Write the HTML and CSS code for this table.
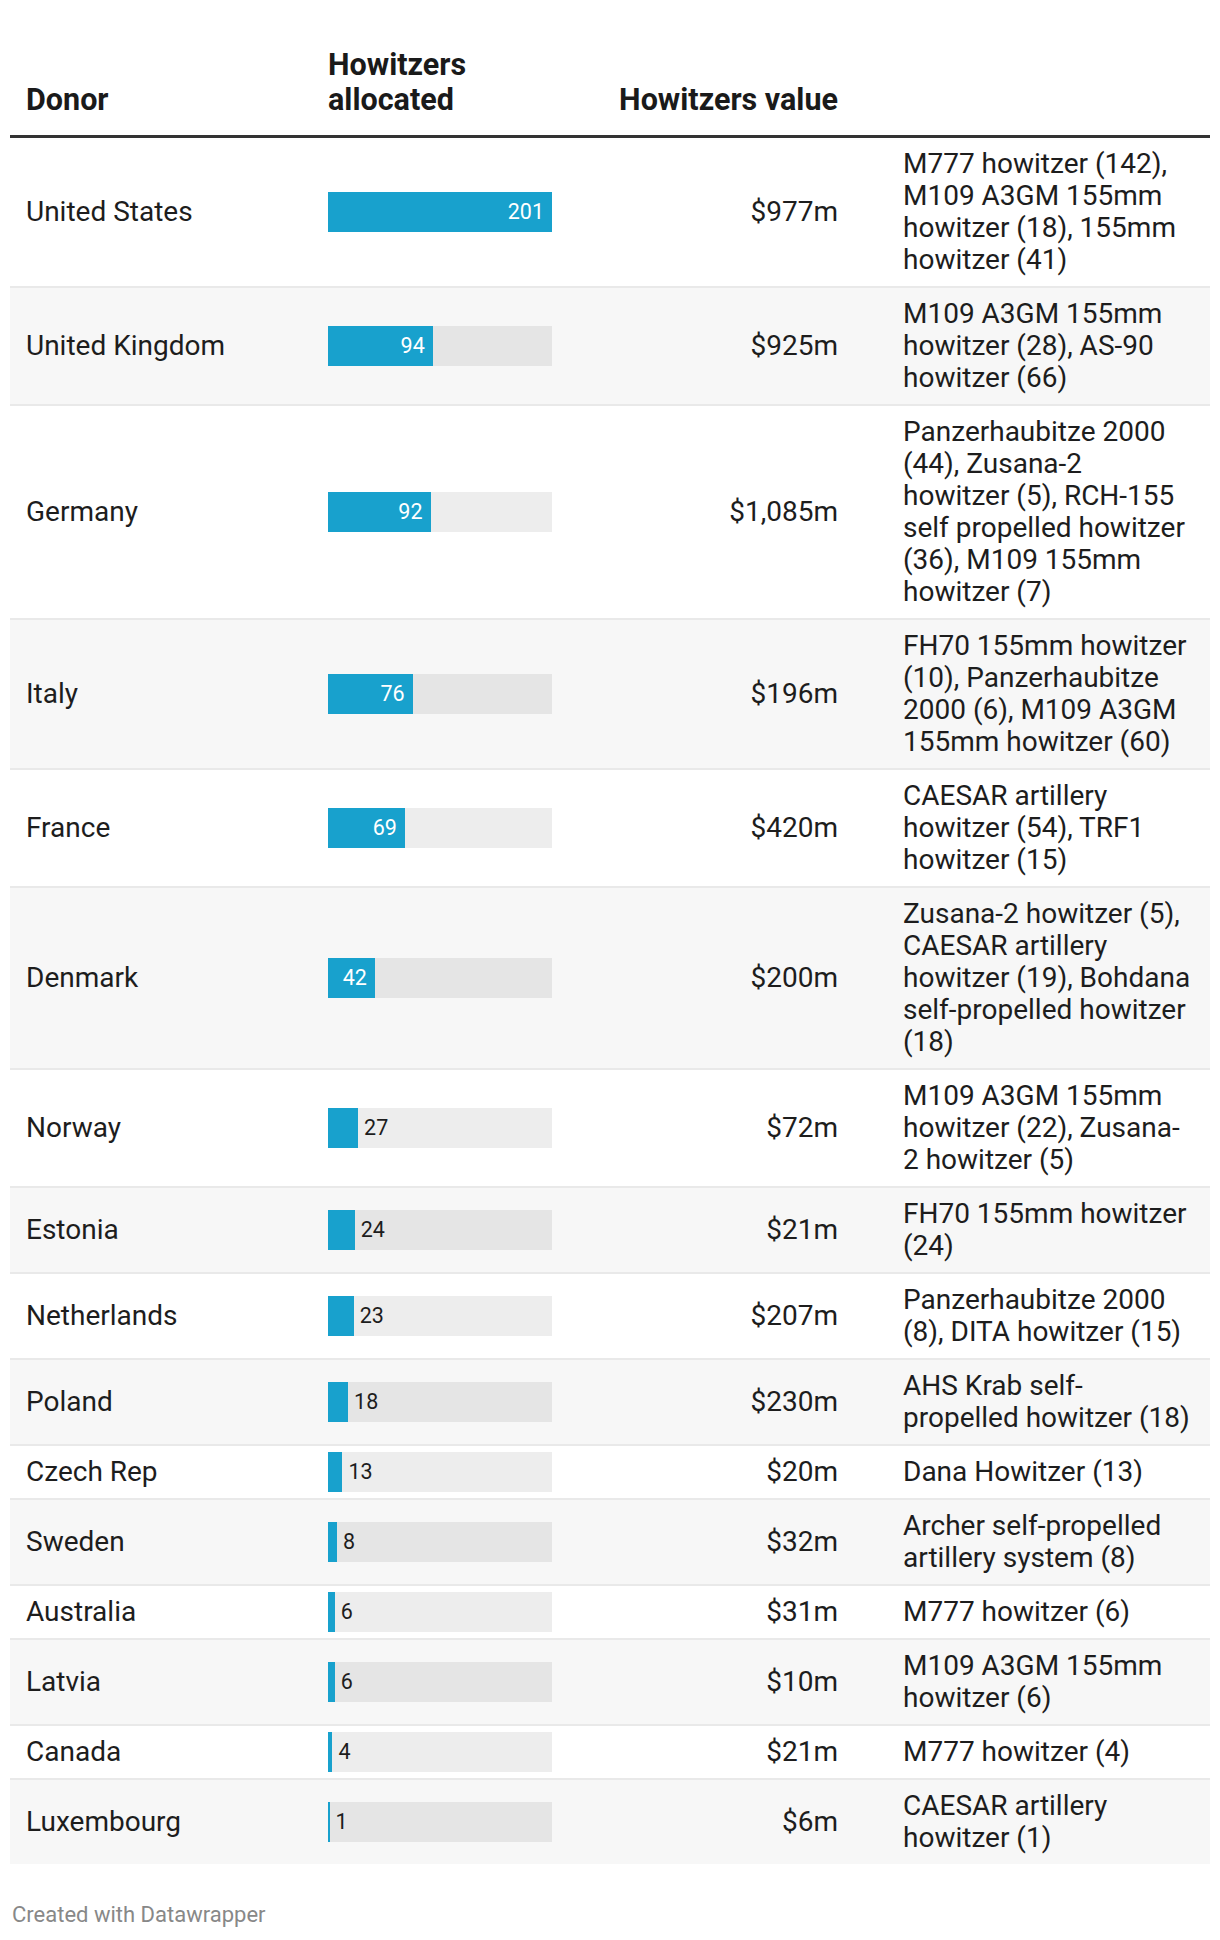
FILE: index.html
```html
<!DOCTYPE html>
<html lang="en">
<head>
<meta charset="utf-8">
<title>Howitzers donated to Ukraine</title>
<link rel="stylesheet" href="styles.css">
</head>
<body>
<div class="chart">
  <div class="table">
    <div class="thead">
      <div class="th th-donor">Donor</div>
      <div class="th th-bar">Howitzers allocated</div>
      <div class="th th-value">Howitzers value</div>
      <div class="th th-desc"></div>
    </div>

    <div class="row">
      <div class="donor">United States</div>
      <div class="bar"><div class="track"><div class="fill" style="width:224px"><span class="in">201</span></div></div></div>
      <div class="value">$977m</div>
      <div class="desc">M777 howitzer (142), M109 A3GM 155mm howitzer (18), 155mm howitzer (41)</div>
    </div>
    <div class="row shaded">
      <div class="donor">United Kingdom</div>
      <div class="bar"><div class="track"><div class="fill" style="width:104.76px"><span class="in">94</span></div></div></div>
      <div class="value">$925m</div>
      <div class="desc">M109 A3GM 155mm howitzer (28), AS-90 howitzer (66)</div>
    </div>
    <div class="row">
      <div class="donor">Germany</div>
      <div class="bar"><div class="track"><div class="fill" style="width:102.53px"><span class="in">92</span></div></div></div>
      <div class="value">$1,085m</div>
      <div class="desc">Panzerhaubitze 2000 (44), Zusana-2 howitzer (5), RCH-155 self propelled howitzer (36), M109 155mm howitzer (7)</div>
    </div>
    <div class="row shaded">
      <div class="donor">Italy</div>
      <div class="bar"><div class="track"><div class="fill" style="width:84.7px"><span class="in">76</span></div></div></div>
      <div class="value">$196m</div>
      <div class="desc">FH70 155mm howitzer (10), Panzerhaubitze 2000 (6), M109 A3GM 155mm howitzer (60)</div>
    </div>
    <div class="row">
      <div class="donor">France</div>
      <div class="bar"><div class="track"><div class="fill" style="width:76.9px"><span class="in">69</span></div></div></div>
      <div class="value">$420m</div>
      <div class="desc">CAESAR artillery howitzer (54), TRF1 howitzer (15)</div>
    </div>
    <div class="row shaded">
      <div class="donor">Denmark</div>
      <div class="bar"><div class="track"><div class="fill" style="width:46.81px"><span class="in">42</span></div></div></div>
      <div class="value">$200m</div>
      <div class="desc">Zusana-2 howitzer (5), CAESAR artillery howitzer (19), Bohdana self-propelled howitzer (18)</div>
    </div>
    <div class="row">
      <div class="donor">Norway</div>
      <div class="bar"><div class="track"><div class="fill" style="width:30.09px"></div><span class="out">27</span></div></div>
      <div class="value">$72m</div>
      <div class="desc">M109 A3GM 155mm howitzer (22), Zusana-2 howitzer (5)</div>
    </div>
    <div class="row shaded">
      <div class="donor">Estonia</div>
      <div class="bar"><div class="track"><div class="fill" style="width:26.75px"></div><span class="out">24</span></div></div>
      <div class="value">$21m</div>
      <div class="desc">FH70 155mm howitzer (24)</div>
    </div>
    <div class="row">
      <div class="donor">Netherlands</div>
      <div class="bar"><div class="track"><div class="fill" style="width:25.63px"></div><span class="out">23</span></div></div>
      <div class="value">$207m</div>
      <div class="desc">Panzerhaubitze 2000 (8), DITA howitzer (15)</div>
    </div>
    <div class="row shaded">
      <div class="donor">Poland</div>
      <div class="bar"><div class="track"><div class="fill" style="width:20.06px"></div><span class="out">18</span></div></div>
      <div class="value">$230m</div>
      <div class="desc">AHS Krab self-propelled howitzer (18)</div>
    </div>
    <div class="row">
      <div class="donor">Czech Rep</div>
      <div class="bar"><div class="track"><div class="fill" style="width:14.49px"></div><span class="out">13</span></div></div>
      <div class="value">$20m</div>
      <div class="desc">Dana Howitzer (13)</div>
    </div>
    <div class="row shaded">
      <div class="donor">Sweden</div>
      <div class="bar"><div class="track"><div class="fill" style="width:8.92px"></div><span class="out">8</span></div></div>
      <div class="value">$32m</div>
      <div class="desc">Archer self-propelled artillery system (8)</div>
    </div>
    <div class="row">
      <div class="donor">Australia</div>
      <div class="bar"><div class="track"><div class="fill" style="width:6.69px"></div><span class="out">6</span></div></div>
      <div class="value">$31m</div>
      <div class="desc">M777 howitzer (6)</div>
    </div>
    <div class="row shaded">
      <div class="donor">Latvia</div>
      <div class="bar"><div class="track"><div class="fill" style="width:6.69px"></div><span class="out">6</span></div></div>
      <div class="value">$10m</div>
      <div class="desc">M109 A3GM 155mm howitzer (6)</div>
    </div>
    <div class="row">
      <div class="donor">Canada</div>
      <div class="bar"><div class="track"><div class="fill" style="width:4.46px"></div><span class="out">4</span></div></div>
      <div class="value">$21m</div>
      <div class="desc">M777 howitzer (4)</div>
    </div>
    <div class="row shaded">
      <div class="donor">Luxembourg</div>
      <div class="bar"><div class="track"><div class="fill" style="width:1.5px"></div><span class="out">1</span></div></div>
      <div class="value">$6m</div>
      <div class="desc">CAESAR artillery howitzer (1)</div>
    </div>
  </div>
  <div class="footer">Created with Datawrapper</div>
</div>
</body>
</html>
```

FILE: styles.css
```css
html, body {
  margin: 0;
  padding: 0;
  background: #ffffff;
}

body {
  font-family: Roboto, "Liberation Sans", Arial, sans-serif;
  color: #1d1d1d;
}

.chart {
  padding: 0 10px;
}

.table {
  width: 1200px;
}

.thead,
.row {
  display: grid;
  grid-template-columns: 318px 224px 286px 372px;
}

.thead {
  box-sizing: border-box;
  height: 138px;
  align-items: end;
  padding-bottom: 18px;
  border-bottom: 3px solid #333333;
  font-weight: 700;
  font-size: 30.5px;
  line-height: 35px;
  color: #1a1a1a;
}

.th-donor {
  padding-left: 16px;
}

.th-value {
  text-align: right;
}

.row {
  align-items: center;
  padding: 10px 0;
  font-size: 28px;
  line-height: 32px;
  border-top: 2px solid #e9e9e9;
}

.thead + .row {
  border-top: none;
}

.row.shaded {
  background: #f7f7f7;
}

.donor {
  padding-left: 16px;
}

.bar {
  height: 32px;
  display: flex;
  align-items: center;
}

.track {
  display: flex;
  align-items: center;
  width: 224px;
  height: 40px;
  margin: -4px 0;
  background: rgba(0, 0, 0, 0.07);
  font-size: 21.5px;
  line-height: 40px;
}

.fill {
  height: 40px;
  background: #18a1cd;
  display: flex;
  justify-content: flex-end;
  flex-shrink: 0;
}

.in {
  color: #ffffff;
  padding-right: 8px;
}

.out {
  color: #1d1d1d;
  margin-left: 6px;
}

.value {
  text-align: right;
}

.desc {
  padding-left: 65px;
  padding-right: 17px;
}

.footer {
  padding-top: 38px;
  padding-left: 2px;
  font-size: 22px;
  line-height: 26px;
  color: #888888;
}
```
